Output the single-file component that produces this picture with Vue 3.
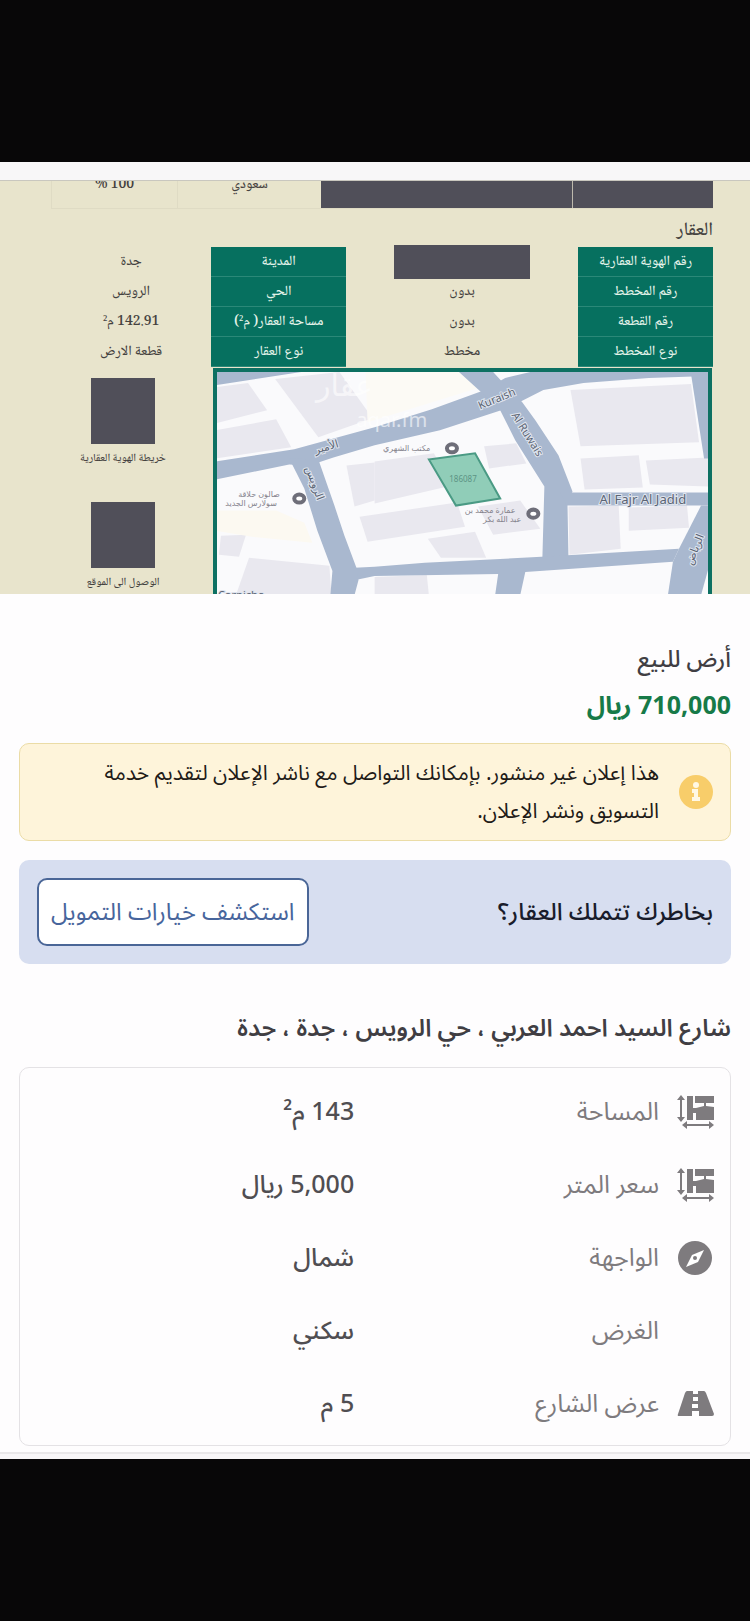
<template>
  <div class="screen" dir="rtl" lang="ar">
    <div class="bar"></div>
    <div class="sheet-edge"></div>

    <section class="photo">
      <div class="owners">
        <span class="masked"></span>
        <span class="masked"></span>
        <span class="owner-cell">سعودي</span>
        <span class="owner-cell">100 %</span>
      </div>

      <h2 class="deed-title">العقار</h2>

      <table class="deed">
        <tbody>
          <tr v-for="row in deed" :key="row.label">
            <th scope="row">{{ row.label }}</th>
            <td>
              <span v-if="row.hidden" class="masked masked-id"></span>
              <template v-else>{{ row.value }}</template>
            </td>
            <th>{{ row.label2 }}</th>
            <td>{{ row.value2 }}</td>
          </tr>
        </tbody>
      </table>

      <div class="deed-bottom">
        <div class="map">
          <svg viewBox="217 372 491 222" preserveAspectRatio="xMidYMin slice" direction="ltr">
            <rect x="217" y="372" width="491" height="222" fill="#fafafc" />
            <!-- blocks -->
            <g fill="#e9e8ef">
              <path d="M217 387l32-4 19 27-51 13z" />
              <path d="M217 430l60-11 15 28-75 11z" />
              <path d="M276 379l64-7 33 46-54 19z" />
              <path d="M570 390l120-6 8 58-118 4z" />
              <path d="M580 458l58-3 4 32-58 2z" />
              <path d="M645 460l62-3v29l-58-2z" />
              <path d="M568 506l50-1 2 43-51 6z" />
              <path d="M628 507l58-2 2 22-60 3z" />
              <path d="M347 465l28-3v38l-20 6z" />
              <path d="M375 461l59-8 18 32-77 18z" />
              <path d="M484 446l32-3 10 20-37 5z" />
              <path d="M360 516l97-14 8 24-97 15z" />
              <path d="M478 506l42-6 20 28-47 6z" />
              <path d="M428 538l47-7 11 26-45 0z" />
              <path d="M222 535l25-1-7 22-20-2z" />
              <path d="M250 557l80 8 2 29h-95z" />
              <path d="M375 576l52-2 2 20h-54z" />
            </g>
            <path d="M217 510l60 0 28 12 8 20-60-6-36-6z" fill="#fcf9f1" />
            <path d="M366 372l94 0 18 16-110 34z" fill="#fcfaf5" />
            <!-- roads -->
            <g fill="#a9b8cf">
              <path d="M217 372h85l-85 13z" />
              <path d="M217 461l78-12 80-22 57-18 50-18 23-13 25-6h178v4l-60 2-65 5-40 7-24 12-18 8-61 20-65 15-41 12-24 8-20-1-73 15z" />
              <path d="M459 372h34l11 12 18 18 13 18 23 35 14 36-5 12 1 55h-26l2-72-29-46-15-30-18-17z" />
              <path d="M560 492h148v13H566z" />
              <path d="M690 374h18v84h-5z" />
              <path d="M700 505h8v60l-8 29h-33l5-33 6-13z" />
              <path d="M350 567l25-1 50-4 116-6 137-8-6 13-147 10-5 23h-25l3-21-123 2-19 4z" />
              <path d="M290 458l29 1 16 46 10 30 12 32 2 12-4 15h-24l2-24-15-40-13-42z" />
            </g>
            <!-- plot -->
            <path d="M429 459l46-6 25 45-44 7z" fill="#90cdb8" stroke="#4a9a84" stroke-width="2" />
            <text x="463" y="482" class="plot">186087</text>
            <!-- pins -->
            <g fill="#fff" stroke="#6e6e79" stroke-width="4">
              <ellipse cx="452" cy="448" rx="5" ry="4" />
              <ellipse cx="533" cy="513" rx="5" ry="4" />
              <ellipse cx="300" cy="498" rx="5" ry="4" />
            </g>
            <g class="place">
              <text x="407" y="451">مكتب الشهري</text>
              <text x="490" y="512">عمارة محمد بن</text>
              <text x="502" y="521">عبد الله بكر</text>
              <text x="260" y="496">صالون حلاقة</text>
              <text x="252" y="505">سولارس الجديد</text>
            </g>
            <g class="street">
              <text transform="translate(498 402) rotate(-22)">Kuraish</text>
              <text transform="translate(524 436) rotate(58)">Al Ruwais</text>
              <text x="642" y="503" class="wide">Al Fajr Al Jadid</text>
              <text transform="translate(328 450) rotate(-16)">الأمير</text>
              <text transform="translate(312 484) rotate(70)">الرويس</text>
              <text transform="translate(697 550) rotate(-68)">الرياض</text>
              <text x="242" y="598">Corniche</text>
            </g>
            <text x="345" y="396" class="mark mark-ar">عقار</text>
            <text x="392" y="427" class="mark">aqar.fm</text>
          </svg>
        </div>
        <div class="codes">
          <figure>
            <span class="masked masked-qr"></span>
            <figcaption>خريطة الهوية العقارية</figcaption>
          </figure>
          <figure>
            <span class="masked masked-qr"></span>
            <figcaption>الوصول الى الموقع</figcaption>
          </figure>
        </div>
      </div>
    </section>

    <main class="content">
      <h1 class="title">أرض للبيع</h1>
      <p class="price">710,000 ريال</p>

      <div class="notice">
        <svg class="notice-icon" viewBox="0 0 34 34">
          <circle cx="17" cy="17" r="17" fill="#f8cd6a" />
          <circle cx="17" cy="10" r="3" fill="#fff8e4" />
          <path d="M13 14h6v8h2v4h-8v-4h2v-4h-2z" fill="#fff8e4" />
        </svg>
        <p>هذا إعلان غير منشور. بإمكانك التواصل مع ناشر الإعلان لتقديم خدمة التسويق ونشر الإعلان.</p>
      </div>

      <div class="finance">
        <span>بخاطرك تتملك العقار؟</span>
        <button type="button">استكشف خيارات التمويل</button>
      </div>

      <h2 class="address">شارع السيد احمد العربي ، حي الرويس ، جدة ، جدة</h2>

      <dl class="details">
        <div v-for="item in details" :key="item.label" class="row">
          <span class="icon">
            <svg v-if="item.icon === 'area'" viewBox="0 0 37 34">
              <path d="M10 1h6v12h3v3h-3v9h-6zM18 1h19v7h-8v3h-2v-3h-9zM19 13l8-2h2l8 1v13H19v-7h-3v-4h3z" />
              <path d="M4 5v18M8 30h26" fill="none" stroke="#7e7b7e" stroke-width="2" />
              <path d="M4 0l4 5H0zM4 27l4-5H0zM5 30l5-4v8zM37 30l-5-4v8z" />
            </svg>
            <svg v-else-if="item.icon === 'compass'" viewBox="0 0 37 34">
              <circle cx="18" cy="17" r="17" />
              <path d="M27 9l-6 12-12 5 6-12z" fill="#fff" />
              <circle cx="18" cy="17" r="2" />
            </svg>
            <svg v-else-if="item.icon === 'road'" viewBox="0 0 37 34">
              <path d="M10 4h6v3h5V4h6q1 0 2 2l8 21q0 2-2 2H22v-5h-7v5H2q-2 0-1-2L8 6q1-2 2-2z" />
              <path d="M16 10h5v4h-5zM15 17h6v4h-6z" fill="#fff" />
            </svg>
          </span>
          <dt>{{ item.label }}</dt>
          <dd>{{ item.value }}</dd>
        </div>
      </dl>
    </main>

    <div class="sheet-end"></div>
    <div class="bar"></div>
  </div>
</template>

<script setup>
const deed = [
  { label: 'رقم الهوية العقارية', hidden: true, label2: 'المدينة', value2: 'جدة' },
  { label: 'رقم المخطط', value: 'بدون', label2: 'الحي', value2: 'الرويس' },
  { label: 'رقم القطعة', value: 'بدون', label2: 'مساحة العقار( م²)', value2: '142.91 م²' },
  { label: 'نوع المخطط', value: 'مخطط', label2: 'نوع العقار', value2: 'قطعة الارض' }
]

const details = [
  { icon: 'area', label: 'المساحة', value: '143 م²' },
  { icon: 'area', label: 'سعر المتر', value: '5,000 ريال' },
  { icon: 'compass', label: 'الواجهة', value: 'شمال' },
  { icon: '', label: 'الغرض', value: 'سكني' },
  { icon: 'road', label: 'عرض الشارع', value: '5 م' }
]
</script>

<style>
body {
  margin: 0;
  background: #fefdfe;
}
</style>

<style scoped>
.screen {
  font-family: "Noto Sans Arabic", "Noto Sans", "DejaVu Sans", sans-serif;
  color: #403e43;
}

h1, h2, p, dl, dd, figure {
  margin: 0;
}

.bar {
  height: 162px;
  background: #080708;
}

.sheet-edge {
  height: 18px;
  background: #f8f7f8;
  border-bottom: 1px solid #c9c7bf;
}

/* deed photo */
.photo {
  height: 413px;
  overflow: hidden;
  box-sizing: border-box;
  padding: 0 37px 0 51px;
  background: #e8e4cc;
  font-family: "Noto Naskh Arabic", "Liberation Serif", "DejaVu Sans", serif;
  color: #45423f;
}

.owners {
  display: grid;
  grid-template-columns: 140fr 252fr 144fr 126fr;
  height: 27px;
  border-bottom: 1px solid #dfdbc4;
}

.owners .masked + .masked {
  border-right: 1px solid #bdb9ad;
}

.owner-cell {
  line-height: 8px;
  font-size: 14px;
  font-weight: 500;
  text-align: center;
  border-left: 1px solid #dfdbc4;
}

.masked {
  background: #504f59;
}

.deed-title {
  height: 38px;
  line-height: 44px;
  font-size: 19px;
  font-weight: 500;
}

.deed {
  width: 100%;
  border-spacing: 0;
  table-layout: fixed;
}

.deed th, .deed td {
  height: 30px;
  padding: 0;
  font-size: 14px;
  line-height: 20px;
  font-weight: 500;
  text-align: center;
  box-sizing: border-box;
}

.deed th {
  width: 20.4%;
  color: #e4f3ea;
  background: #06705f;
  border-bottom: 1px solid #2b8878;
}

.deed td:nth-child(2) {
  width: 35%;
}

.masked-id {
  display: block;
  width: 136px;
  height: 34px;
  margin: -2px auto;
}

.deed-bottom {
  display: flex;
  gap: 18px;
  padding: 1px 1px 0 0;
}

.map {
  flex: 1;
  height: 227px;
  box-sizing: border-box;
  border: 4px solid #0d7062;
  border-bottom: 0;
}

.map svg {
  display: block;
  width: 100%;
  height: 100%;
}

.map text {
  text-anchor: middle;
  font-family: "Noto Sans", "DejaVu Sans", sans-serif;
}

.plot {
  font-size: 8px;
  fill: #5d9485;
}

.place {
  font-size: 8px;
  fill: #85838d;
}

.street {
  font-size: 11px;
  fill: #5b6474;
  stroke: #dfe4ee;
  stroke-width: 2px;
  paint-order: stroke;
}

.street .wide {
  font-size: 13px;
}

.mark {
  font-size: 20px;
  fill: #fff;
  opacity: 0.6;
}

.map .mark-ar {
  font-size: 30px;
}

.codes {
  width: 144px;
  padding-top: 10px;
}

.codes figure {
  display: flex;
  flex-direction: column;
  align-items: center;
  height: 124px;
}

.masked-qr {
  width: 64px;
  height: 66px;
}

.codes figcaption {
  margin-top: 5px;
  font-size: 11px;
  font-weight: 500;
  line-height: 20px;
  white-space: nowrap;
}

/* listing */
.content {
  padding: 44px 19px 0;
}

.title {
  font-size: 23px;
  line-height: 44px;
  font-weight: 500;
}

.price {
  font-size: 25px;
  line-height: 48px;
  font-weight: 700;
  color: #177a48;
}

.notice {
  display: flex;
  align-items: center;
  gap: 20px;
  margin-top: 13px;
  padding: 10px 17px;
  border: 1px solid #ebdca6;
  border-radius: 10px;
  background: #fef4da;
  color: #1f1b18;
  font-size: 21px;
  line-height: 38px;
}

.notice-icon {
  flex: none;
  width: 34px;
  height: 34px;
}

.finance {
  display: flex;
  align-items: center;
  justify-content: space-between;
  margin-top: 19px;
  padding: 18px;
  border-radius: 10px;
  background: #d7def0;
  color: #191c2b;
  font-size: 24px;
  font-weight: 500;
}

.finance button {
  height: 68px;
  padding: 0 12px;
  border: 2px solid #4a6697;
  border-radius: 10px;
  background: #fff;
  color: #47659c;
  font-family: inherit;
  font-size: 24px;
}

.address {
  margin-top: 43px;
  font-size: 24px;
  line-height: 44px;
  font-weight: 600;
}

.details {
  margin-top: 16px;
  padding: 7px 16px 5px;
  border: 1px solid #e4e2e5;
  border-radius: 10px;
}

.row {
  display: grid;
  grid-template-columns: 37px 305fr 316fr;
  align-items: center;
  height: 73px;
  font-size: 25px;
}

.row dt {
  padding-right: 18px;
  color: #7e7b7e;
}

.row dd {
  padding-right: 8px;
  font-weight: 500;
  color: #504e52;
}

.icon svg {
  display: block;
  width: 37px;
  height: 34px;
  fill: #7e7b7e;
}

.sheet-end {
  height: 5px;
  margin-top: 6px;
  border-top: 2px solid #e9e7e9;
  background: #f8f6f8;
}
</style>
